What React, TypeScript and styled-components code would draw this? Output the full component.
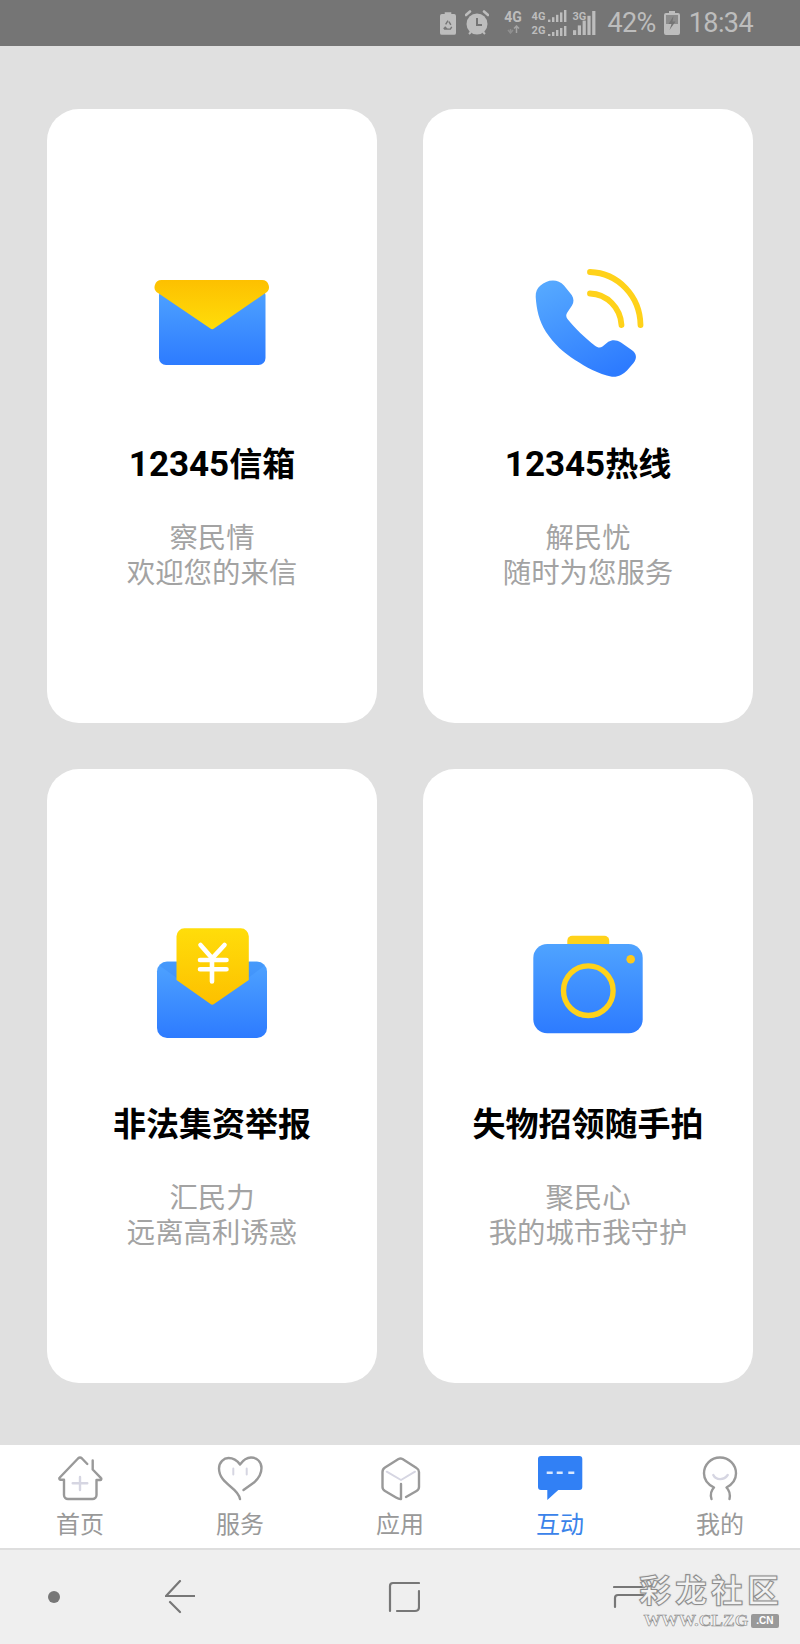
import React from 'react';
import styled, { createGlobalStyle } from 'styled-components';

const GlobalStyle = createGlobalStyle`
  html, body { margin: 0; padding: 0; background: #e0e0e0; }
  body { font-family: 'Roboto', 'Noto Sans CJK SC', sans-serif; }
`;

const Page = styled.div`
  width: 800px;
  height: 1644px;
  display: flex;
  flex-direction: column;
  overflow: hidden;
`;

/* status bar */
const StatusBar = styled.div`
  height: 46px;
  flex: none;
  background: #757575;
  color: #bdbdbd;
  display: flex;
  align-items: center;
  justify-content: flex-end;
  padding-right: 47px;
  box-sizing: border-box;
`;
const StatusGroup = styled.div<{ $gap: number; $right?: number }>`
  display: flex;
  align-items: center;
  gap: ${p => p.$gap}px;
  margin-right: ${p => p.$right ?? 0}px;
`;
const StatusText = styled.span`
  font-size: 27px;
  line-height: 46px;
  font-family: 'Roboto', sans-serif;
  letter-spacing: -0.6px;
`;
const NetStack = styled.div`
  display: flex;
  flex-direction: column;
  align-items: center;
  width: 19px;
  gap: 2px;
`;
const NetRow = styled.div`
  display: flex;
  align-items: flex-end;
  gap: 3px;
  height: 12px;
`;
const NetLabel = styled.span<{ $size?: number }>`
  font-size: ${p => p.$size ?? 11}px;
  font-weight: 700;
  line-height: 11px;
  font-family: 'Roboto', sans-serif;
`;
const NetColumn = styled.div`
  display: flex;
  flex-direction: column;
  gap: 2px;
`;
const SignalOverlay = styled.div`
  position: relative;
  width: 24px;
  height: 24px;
  margin-left: -4px;
`;
const SignalTag = styled.span`
  position: absolute;
  left: -1px;
  top: 0;
  font-size: 11px;
  font-weight: 700;
  line-height: 11px;
  font-family: 'Roboto', sans-serif;
`;

/* cards */
const Main = styled.main`
  height: 1399px;
  flex: none;
  box-sizing: border-box;
  padding: 63px 47px 62px;
  display: grid;
  grid-template-columns: 330px 330px;
  grid-template-rows: 614px 614px;
  column-gap: 46px;
  row-gap: 46px;
  background: #e0e0e0;
`;
const Card = styled.section`
  background: #fff;
  border-radius: 32px;
  padding-top: 154px;
  display: flex;
  flex-direction: column;
  align-items: center;
  box-sizing: border-box;
`;
const CardTitle = styled.h2`
  margin: 60px 0 0;
  font-size: 33px;
  line-height: 44px;
  font-weight: 700;
  color: #000;
  text-align: center;
`;
const TitleNumber = styled.span`
  font-size: 35px;
`;
const CardText = styled.p`
  margin: 35px 0 0;
  font-size: 28.4px;
  line-height: 34.5px;
  font-weight: 400;
  color: #a3a3a3;
  text-align: center;
`;

/* tab bar */
const TabBar = styled.nav`
  height: 103px;
  flex: none;
  background: #fff;
  display: grid;
  grid-template-columns: repeat(5, 160px);
`;
const Tab = styled.div<{ $active?: boolean }>`
  display: flex;
  flex-direction: column;
  align-items: center;
  padding-top: 9px;
  color: ${p => (p.$active ? '#3a83ea' : '#999')};
  font-size: 24px;
  line-height: 36px;
`;
const TabLabel = styled.span`
  margin-top: 5px;
`;

/* system nav */
const SystemNav = styled.div`
  position: relative;
  flex: 1;
  background: #efefef;
  border-top: 2px solid #dedede;
  display: flex;
  align-items: center;
`;
const NavSlot = styled.div<{ $left: number }>`
  margin-left: ${p => p.$left}px;
  display: flex;
`;
const Watermark = styled.div`
  position: absolute;
  left: 636px;
  top: 15px;
  width: 150px;
  display: flex;
  flex-direction: column;
  align-items: center;
`;
const WatermarkName = styled.div`
  font-family: 'Noto Sans CJK SC', sans-serif;
  font-size: 32px;
  line-height: 46px;
  letter-spacing: 4px;
  font-weight: 700;
  color: #f2f2f2;
  -webkit-text-stroke: 1px #8d8d8d;
  text-shadow: 0 0 2px #aaa;
  white-space: nowrap;
`;
const WatermarkUrl = styled.div`
  display: flex;
  align-items: center;
  gap: 3px;
  margin-top: 1px;
  font-family: 'Liberation Serif', serif;
  font-size: 17.5px;
  line-height: 17px;
  font-weight: 700;
  color: #f2f2f2;
  -webkit-text-stroke: 0.6px #858585;
  white-space: nowrap;
`;
const WatermarkBadge = styled.span`
  background: #999;
  color: #fff;
  font-size: 10px;
  line-height: 14px;
  padding: 0 5px;
  border-radius: 2px;
  -webkit-text-stroke: 0;
  font-family: 'Liberation Sans', sans-serif;
`;

const IconSvg = styled.svg`
  width: 120px;
  height: 120px;
  display: block;
  flex: none;
`;

const MailIcon = () => (
  <IconSvg viewBox="0 0 120 120">
    <defs>
      <linearGradient id="mailBlue" x1="0" y1="0" x2="0" y2="1">
        <stop offset="0" stopColor="#4fa3ff" />
        <stop offset="1" stopColor="#2d7bff" />
      </linearGradient>
      <linearGradient id="mailYellow" x1="0" y1="0" x2="0" y2="1">
        <stop offset="0" stopColor="#fdc000" />
        <stop offset="1" stopColor="#ffdd0a" />
      </linearGradient>
    </defs>
    <rect x="7" y="25" width="106.5" height="77" rx="7" fill="url(#mailBlue)" />
    <path d="M10 17H109.5a7 7 0 0 1 4 13L62 65.5a3 3 0 0 1-3.6 0L6 30a7 7 0 0 1 4-13Z" fill="url(#mailYellow)" />
  </IconSvg>
);

const PhoneIcon = () => (
  <IconSvg viewBox="0 0 120 120">
    <defs>
      <linearGradient id="phoneBlue" x1="0.2" y1="0" x2="0.7" y2="1">
        <stop offset="0" stopColor="#55a8ff" />
        <stop offset="1" stopColor="#2d7bff" />
      </linearGradient>
    </defs>
    <path
      d="M25 17.5C20 17.5 16 19.5 12.5 22.5C9 25.5 7.5 29 7.7 34C8.5 46 11 58 18 69C26 81 36 90 47 97C58 104 70 111 84 113.7C90 114.3 95 111.5 99 107.5L105.5 100C109.5 95 108.5 90.5 103.7 87L93 79.5C88.5 76.5 84 76.5 80.3 78.7L74.5 83.5C72 85.3 69.5 84.5 67 82.7C57 75 47 65.5 39.5 56C37.7 53.5 38 51.5 39.3 49.5L44 42.5C46 39.5 46 35.5 43.7 32L36 22.5C33 19 29 17.5 25 17.5Z"
      fill="url(#phoneBlue)"
    />
    <g fill="none" stroke="#ffd21a" strokeWidth="5.8" strokeLinecap="round">
      <path d="M62 9C90 10 112 33 112.5 62" />
      <path d="M62 30.5C79 31 92.5 45 93.5 62" />
    </g>
  </IconSvg>
);

const MoneyIcon = () => (
  <IconSvg viewBox="0 0 120 120">
    <defs>
      <linearGradient id="moneyBlue" x1="0" y1="0" x2="0" y2="1">
        <stop offset="0" stopColor="#4fa3ff" />
        <stop offset="1" stopColor="#2d7bff" />
      </linearGradient>
      <linearGradient id="moneyYellow" x1="0" y1="0" x2="0" y2="1">
        <stop offset="0" stopColor="#ffdd0a" />
        <stop offset="1" stopColor="#fdc000" />
      </linearGradient>
    </defs>
    <rect x="5" y="38.5" width="110" height="76.5" rx="10" fill="url(#moneyBlue)" />
    <path d="M8 43L25 55V39H15Q10 39 8 43ZM112 43L96 55V39H105Q110 39 112 43Z" fill="#2f7fee" opacity="0.25" />
    <path d="M32.5 5.3H88.8a8 8 0 0 1 8 8V57L62 81a3 3 0 0 1-3.5 0L24.5 57V13.3a8 8 0 0 1 8-8Z" fill="url(#moneyYellow)" />
    <g fill="none" stroke="#fff" strokeWidth="4.6" strokeLinecap="round">
      <path d="M48.5 22L60.2 35.3L72.5 22" />
      <path d="M48 37H74.5M48 46.3H74.5M60 35.5V58.5" />
    </g>
  </IconSvg>
);

const CameraIcon = () => (
  <IconSvg viewBox="0 0 120 120">
    <defs>
      <linearGradient id="cameraBlue" x1="0" y1="0" x2="0" y2="1">
        <stop offset="0" stopColor="#4fa3ff" />
        <stop offset="1" stopColor="#2d7bff" />
      </linearGradient>
    </defs>
    <rect x="39.3" y="12.7" width="42" height="16" rx="5" fill="#ffd21a" />
    <rect x="5.3" y="21" width="109.4" height="89.3" rx="14" fill="url(#cameraBlue)" />
    <circle cx="60.3" cy="67.7" r="24.8" fill="none" stroke="#ffd21a" strokeWidth="5.4" />
    <circle cx="102.7" cy="36.3" r="4.3" fill="#ffc91a" />
  </IconSvg>
);

const TabSvg = styled.svg`
  width: 48px;
  height: 48px;
  display: block;
  fill: none;
  stroke: #999;
  stroke-width: 2.4;
  stroke-linecap: round;
  stroke-linejoin: round;
`;
const ACCENT = '#d6d6e2';

const HomeTabIcon = () => (
  <TabSvg viewBox="0 0 48 48">
    <path d="M31.3 10L26 4.5a3 3 0 0 0-4 0L3.8 23.5a1.2 1.2 0 0 0 .8 2.2H8V41a4 4 0 0 0 4 4H36.5a4 4 0 0 0 4-4V26H44a1.2 1.2 0 0 0 .8-2.2L36.7 15.5V6.5" />
    <path d="M16.7 29.3H31.3M24 23V36" stroke={ACCENT} />
  </TabSvg>
);
const HeartTabIcon = () => (
  <TabSvg viewBox="0 0 48 48">
    <path d="M24 45C23 40 20 37 15 33C9 28 3 23 3 14.5C3 8 8 4 12.5 4C18 4 21.5 7 24 10.5C26.5 7 30 3.5 35 3.5C41 3.5 45.5 8 45.5 14C45.5 20 42.5 24.5 38 28.5L27.5 36" />
    <path d="M17.3 14.5V20.5M30.7 14.5V20.5" stroke={ACCENT} strokeWidth="2" />
  </TabSvg>
);
const CubeTabIcon = () => (
  <TabSvg viewBox="0 0 48 48">
    <path d="M30 43L40.5 37Q43 35.5 43 33V18Q43 15.5 40.5 14L26.5 5Q24.5 4 22.5 5L9 13.5Q6.5 15 6.5 18V33Q6.5 35.5 9 37L20 43.5Q23.5 45.5 25 45V30" />
    <path d="M10.7 17.7L25 26L39 17.7" stroke={ACCENT} strokeWidth="2" />
  </TabSvg>
);
const ChatTabIcon = () => (
  <TabSvg viewBox="0 0 48 48" style={{ stroke: 'none' }}>
    <path d="M5 2H43.3a3 3 0 0 1 3 3V33a3 3 0 0 1-3 3H22.3L11.3 46V36H5a3 3 0 0 1-3-3V5a3 3 0 0 1 3-3Z" fill="#3180f5" />
    <path d="M10.7 18.7H16.7M20.7 18.7H26.7M32.3 18.7H38.3" stroke="#d9e8ff" strokeWidth="2.4" strokeLinecap="butt" fill="none" />
  </TabSvg>
);
const MeTabIcon = () => (
  <TabSvg viewBox="0 0 48 48">
    <path d="M15.5 45C14 40 14.5 37 18 33.5C12 30.5 8 25.5 8 19.5C8 10.5 15 3.5 24 3.5C33 3.5 40 10.5 40 19.5C40 25.5 36 30.5 30.5 33.5C34 37 34.5 40 33.5 45" />
    <path d="M17.3 21C20 26.5 28 26.5 31.7 21" stroke={ACCENT} />
  </TabSvg>
);

const RecycleBattery = () => (
  <svg width="16" height="23" viewBox="0 0 17 24">
    <path d="M5 0H12V2H15a2 2 0 0 1 2 2V22a2 2 0 0 1-2 2H2a2 2 0 0 1-2-2V4a2 2 0 0 1 2-2H5Z" fill="#bdbdbd" />
    <path d="M8.5 9L6 13M9.5 10L11.5 13.5M5 15.5L7.5 18H5L4 16.5M12.5 15.5L11 18H8" fill="none" stroke="#757575" strokeWidth="1.5" />
  </svg>
);
const AlarmIcon = () => (
  <svg width="24" height="26" viewBox="0 0 24 26">
    <circle cx="12" cy="14" r="10.5" fill="#bdbdbd" />
    <path d="M1 5L5 1.5M23 5L19 1.5" stroke="#bdbdbd" strokeWidth="2.6" strokeLinecap="round" />
    <path d="M4 24L6 22M20 24L18 22" stroke="#bdbdbd" strokeWidth="2" />
    <path d="M12 8V15H17" fill="none" stroke="#757575" strokeWidth="2" />
  </svg>
);
const ChargingBattery = () => (
  <svg width="16" height="24" viewBox="0 0 16 24">
    <path d="M5 0H11V2H14a2 2 0 0 1 2 2V22a2 2 0 0 1-2 2H2a2 2 0 0 1-2-2V4a2 2 0 0 1 2-2H5Z" fill="#bdbdbd" />
    <rect x="2" y="4" width="12" height="9" fill="#8c8c8c" />
    <path d="M9.5 5L4.5 13H7.5L5.5 19L11.5 10.5H8.5Z" fill="#757575" />
  </svg>
);
const SignalBars = ({ w, h, bars }: { w: number; h: number; bars: number }) => (
  <svg width={w} height={h} viewBox={`0 0 ${w} ${h}`} style={{ display: 'block' }}>
    {Array.from({ length: bars }, (_, i) => {
      const bh = (h * (i + 1)) / bars;
      const step = w / bars;
      return <rect key={i} x={i * step} y={h - bh} width={step - 1.6} height={bh} fill="#bdbdbd" />;
    })}
  </svg>
);
const DataArrows = () => (
  <svg width="13" height="9" viewBox="0 0 13 9">
    <path d="M3.5 9V4M1 5L3.5 8L6 5" fill="none" stroke="#8f8f8f" strokeWidth="1.5" />
    <path d="M9.5 0.5V8M7 3.5L9.5 1L12 3.5" fill="none" stroke="#a5a5a5" strokeWidth="1.5" />
  </svg>
);

const cards = [
  { number: '12345', title: '信箱', lines: ['察民情', '欢迎您的来信'], Icon: MailIcon },
  { number: '12345', title: '热线', lines: ['解民忧', '随时为您服务'], Icon: PhoneIcon },
  { title: '非法集资举报', lines: ['汇民力', '远离高利诱惑'], Icon: MoneyIcon },
  { title: '失物招领随手拍', lines: ['聚民心', '我的城市我守护'], Icon: CameraIcon },
];

const tabs = [
  { label: '首页', Icon: HomeTabIcon },
  { label: '服务', Icon: HeartTabIcon },
  { label: '应用', Icon: CubeTabIcon },
  { label: '互动', Icon: ChatTabIcon, active: true },
  { label: '我的', Icon: MeTabIcon },
];

export default function App() {
  return (
    <Page>
      <GlobalStyle />
      <StatusBar>
        <StatusGroup $gap={9} $right={15}>
          <RecycleBattery />
          <AlarmIcon />
        </StatusGroup>
        <StatusGroup $gap={9} $right={10}>
          <NetStack>
            <NetLabel $size={14}>4G</NetLabel>
            <DataArrows />
          </NetStack>
          <NetColumn>
            <NetRow>
              <NetLabel>4G</NetLabel>
              <SignalBars w={20} h={12} bars={5} />
            </NetRow>
            <NetRow>
              <NetLabel>2G</NetLabel>
              <SignalBars w={20} h={10} bars={5} />
            </NetRow>
          </NetColumn>
          <SignalOverlay>
            <SignalBars w={24} h={24} bars={5} />
            <SignalTag>3G</SignalTag>
          </SignalOverlay>
        </StatusGroup>
        <StatusGroup $gap={8} $right={9}>
          <StatusText>42%</StatusText>
          <ChargingBattery />
        </StatusGroup>
        <StatusText>18:34</StatusText>
      </StatusBar>

      <Main>
        {cards.map(({ number, title, lines, Icon }) => (
          <Card key={title}>
            <Icon />
            <CardTitle>
              {number && <TitleNumber>{number}</TitleNumber>}
              {title}
            </CardTitle>
            <CardText>
              {lines[0]}
              <br />
              {lines[1]}
            </CardText>
          </Card>
        ))}
      </Main>

      <TabBar>
        {tabs.map(({ label, Icon, active }) => (
          <Tab key={label} $active={active}>
            <Icon />
            <TabLabel>{label}</TabLabel>
          </Tab>
        ))}
      </TabBar>

      <SystemNav>
        <NavSlot $left={48}>
          <svg width="12" height="12" viewBox="0 0 12 12">
            <circle cx="6" cy="6" r="6" fill="#777" />
          </svg>
        </NavSlot>
        <NavSlot $left={105}>
          <svg width="30" height="34" viewBox="0 0 30 34" fill="none" stroke="#777" strokeWidth="2.2" strokeLinecap="round">
            <path d="M15 1L1 16H30M5 22L15 32" />
          </svg>
        </NavSlot>
        <NavSlot $left={193}>
          <svg width="32" height="32" viewBox="0 0 32 32" fill="none" stroke="#777" strokeWidth="2.2" strokeLinecap="round">
            <path d="M31 2H5Q2 2 2 5V30M9 30H27Q31 30 31 26V10" />
          </svg>
        </NavSlot>
        <NavSlot $left={193}>
          <svg width="32" height="24" viewBox="0 0 32 24" fill="none" stroke="#777" strokeWidth="2.2" strokeLinecap="round">
            <path d="M1 2H31M31 10H5Q2 10 2 13V22" />
          </svg>
        </NavSlot>
        <Watermark>
          <WatermarkName>彩龙社区</WatermarkName>
          <WatermarkUrl>
            WWW.CLZG
            <WatermarkBadge>.CN</WatermarkBadge>
          </WatermarkUrl>
        </Watermark>
      </SystemNav>
    </Page>
  );
}
